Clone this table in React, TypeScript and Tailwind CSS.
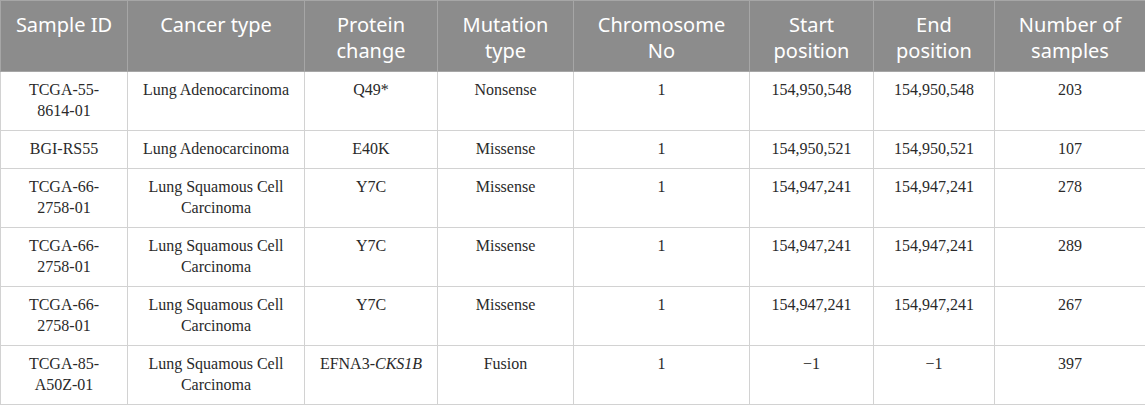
import React from "react";

const headers: React.ReactNode[] = [
  "Sample ID",
  "Cancer type",
  <>Protein<br />change</>,
  <>Mutation<br />type</>,
  <>Chromosome<br />No</>,
  <>Start<br />position</>,
  <>End<br />position</>,
  <>Number of<br />samples</>,
];

const widths = [127, 177, 133, 136, 176, 124, 121, 151];

type Row = {
  id: React.ReactNode;
  cancer: string;
  protein: React.ReactNode;
  mutation: string;
  start: string;
  end: string;
  samples: string;
};

const rows: Row[] = [
  { id: <>TCGA-55-<br />8614-01</>, cancer: "Lung Adenocarcinoma", protein: "Q49*", mutation: "Nonsense", start: "154,950,548", end: "154,950,548", samples: "203" },
  { id: "BGI-RS55", cancer: "Lung Adenocarcinoma", protein: "E40K", mutation: "Missense", start: "154,950,521", end: "154,950,521", samples: "107" },
  { id: <>TCGA-66-<br />2758-01</>, cancer: "Lung Squamous Cell Carcinoma", protein: "Y7C", mutation: "Missense", start: "154,947,241", end: "154,947,241", samples: "278" },
  { id: <>TCGA-66-<br />2758-01</>, cancer: "Lung Squamous Cell Carcinoma", protein: "Y7C", mutation: "Missense", start: "154,947,241", end: "154,947,241", samples: "289" },
  { id: <>TCGA-66-<br />2758-01</>, cancer: "Lung Squamous Cell Carcinoma", protein: "Y7C", mutation: "Missense", start: "154,947,241", end: "154,947,241", samples: "267" },
  {
    id: <>TCGA-85-<br />A50Z-01</>,
    cancer: "Lung Squamous Cell Carcinoma",
    protein: <>EFNA3-<i>CKS1B</i></>,
    mutation: "Fusion",
    start: "\u22121",
    end: "\u22121",
    samples: "397",
  },
];

export default function App() {
  return (
    <div className="w-[1145px] h-[405px] bg-white overflow-hidden">
      <table className="w-[1145px] table-fixed border-collapse">
        <colgroup>
          {widths.map((w, i) => (
            <col key={i} style={{ width: w }} />
          ))}
        </colgroup>
        <thead>
          <tr className="h-[71px] bg-[#8c8c8c]">
            {headers.map((h, i) => (
              <th
                key={i}
                className="align-top border border-[#a6a6a6] px-2 pt-[11px] pb-[6px] text-center font-normal text-white text-[20px] leading-[26px] font-['Noto_Sans',sans-serif]"
              >
                {h}
              </th>
            ))}
          </tr>
        </thead>
        <tbody className="text-[16px] leading-[21px] text-[#2a2a2a] font-['Liberation_Serif',serif]">
          {rows.map((r, i) => (
            <tr key={i}>
              {[r.id, r.cancer, r.protein, r.mutation, "1", r.start, r.end, r.samples].map((c, j) => (
                <td
                  key={j}
                  className="align-top border border-[#d2d2d2] px-2 pt-[7px] pb-[9px] text-center"
                >
                  {c}
                </td>
              ))}
            </tr>
          ))}
        </tbody>
      </table>
    </div>
  );
}
